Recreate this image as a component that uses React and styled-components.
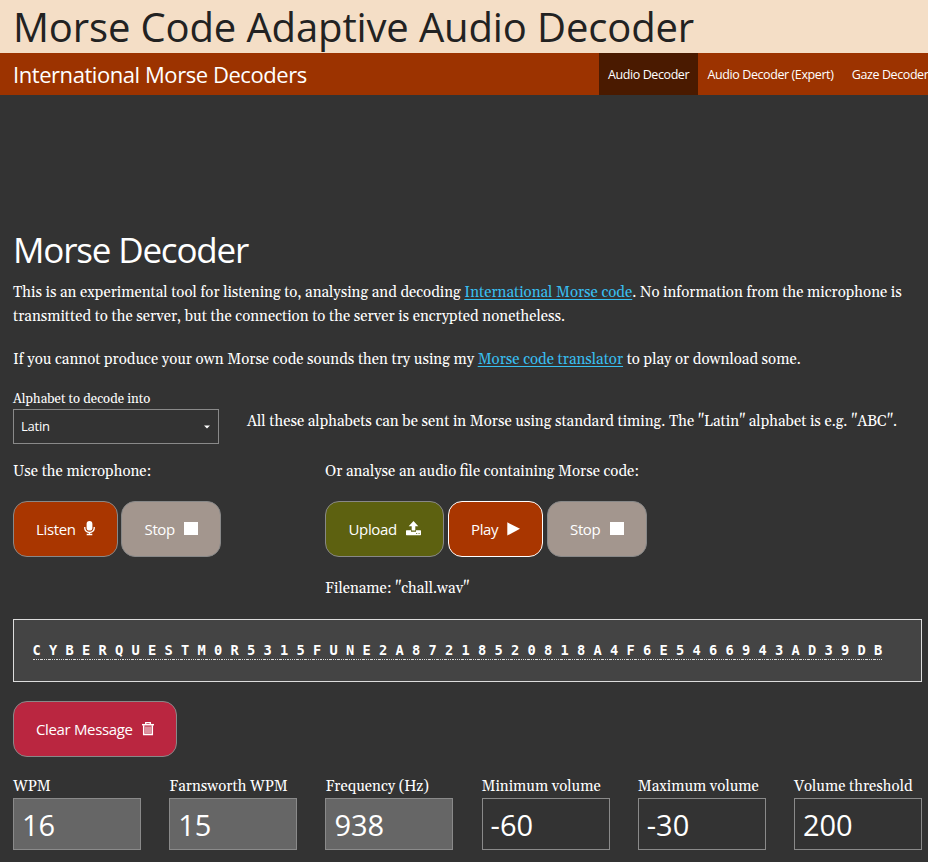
import React from "react";
import styled, { createGlobalStyle } from "styled-components";

const GlobalStyle = createGlobalStyle`
  *, *::before, *::after { box-sizing: border-box; }
  body {
    margin: 0;
    background: #333;
    color: #fff;
    font-family: "Gelasio", Georgia, "Liberation Serif", serif;
    font-size: 15px;
    line-height: 24px;
    overflow: hidden;
  }
`;

const sans = `"Open Sans", "Noto Sans", sans-serif`;

const Page = styled.div`
  height: 862px;
  overflow: hidden;
`;

const SiteHeader = styled.header`
  height: 53px;
  padding-left: 13px;
  background: #f4dec6;
`;

const SiteTitle = styled.h1`
  margin: 0;
  font: 400 40px/53px ${sans};
  letter-spacing: -0.13px;
  color: #222;
  white-space: nowrap;
`;

const NavBar = styled.nav`
  display: flex;
  height: 42px;
  background: #9c3300;
  white-space: nowrap;
`;

const Brand = styled.div`
  width: 599px;
  flex: none;
  padding-left: 13px;
  font: 400 22px/43px ${sans};
  letter-spacing: -0.44px;
`;

const NavItem = styled.a`
  flex: none;
  padding: 0 9px 0 ${(p) => (p.$active ? 9 : 9.4)}px;
  background: ${(p) => (p.$active ? "#4a1a00" : "transparent")};
  font: 400 12.5px/43px ${sans};
  letter-spacing: -0.41px;
  color: #fff;
`;

const Main = styled.main`
  padding: 130px 6px 0 13px;
`;

const Heading = styled.h2`
  margin: 0 0 7px;
  font: 400 35px/49px ${sans};
  letter-spacing: -1.18px;
`;

const Paragraph = styled.p`
  margin: 0 0 19px;
  white-space: nowrap;
`;

const Link = styled.a`
  color: #39bff0;
  text-decoration: underline;
  text-decoration-thickness: 1px;
  text-underline-offset: 2px;
`;

const AlphabetRow = styled.div`
  display: flex;
  height: 56px;
  margin-top: -2px;
`;

const AlphabetField = styled.div`
  width: 206px;
  margin-right: 28px;
`;

const SmallLabel = styled.label`
  display: block;
  height: 20px;
  font-size: 13.1px;
  line-height: 21px;
`;

const SelectBox = styled.div`
  display: flex;
  align-items: center;
  justify-content: space-between;
  height: 35px;
  padding: 0 8px 0 7px;
  border: 1px solid #8a8a8a;
  font: 400 13px/33px ${sans};
  letter-spacing: -0.2px;
`;

const Hint = styled.p`
  margin: 21px 0 0;
  white-space: nowrap;
`;

const Sources = styled.div`
  display: grid;
  grid-template-columns: 312px 1fr;
  margin-top: 14px;
  height: 160px;
`;

const SourceLabel = styled.div`
  height: 42px;
  padding-top: 1px;
`;

const ButtonRow = styled.div`
  display: flex;
  gap: ${(p) => p.$gap}px;
`;

const tones = {
  rust: "#a93600",
  olive: "#5d6110",
  muted: "#a3968e",
  red: "#ba2640",
};

const Button = styled.button`
  display: flex;
  align-items: center;
  flex: none;
  width: ${(p) => p.$width}px;
  height: 56px;
  padding: 0 0 0 ${(p) => p.$inset || 22}px;
  border: 1px solid ${(p) => (p.$focused ? "#fff" : "#888")};
  border-radius: 14px;
  background: ${(p) => tones[p.$tone]};
  color: #fff;
  font: 400 15px/24px ${sans};
  letter-spacing: -0.35px;
  white-space: nowrap;

  svg {
    flex: none;
    margin: 0 0 1px ${(p) => p.$iconGap || 9}px;
  }
`;

const FileName = styled.div`
  margin-top: 20px;
`;

const Output = styled.div`
  height: 63px;
  margin-bottom: 19px;
  padding: 18px 18.5px;
  border: 1px solid #ddd;
  background: #444;
  font: 700 13.7px/24px "DejaVu Sans Mono", monospace;
  white-space: pre;
`;

const Glyph = styled.span`
  display: inline-block;
  width: 8.25px;
  height: 22px;
  border-bottom: 1px dotted #ddd;
`;

const Settings = styled.div`
  display: grid;
  grid-template-columns: repeat(6, 128px);
  justify-content: space-between;
  margin-top: 17px;
`;

const SettingLabel = styled.label`
  display: block;
  height: 24px;
  line-height: 26px;
  white-space: nowrap;
`;

const Value = styled.div`
  height: 52px;
  padding-left: 8px;
  border: 1px solid #8a8a8a;
  background: ${(p) => (p.$readOnly ? "#666" : "transparent")};
  font: 400 29px/52px ${sans};
`;

const Caret = () => (
  <svg width="6" height="4" viewBox="0 0 6 4"><path d="M0 0.5h6L3 3.5z" fill="#fff" /></svg>
);
const Mic = () => (
  <svg width="11" height="15" viewBox="0 0 11 15" fill="none" stroke="#fff">
    <rect x="2.6" y="0" width="5.8" height="9.6" rx="2.9" fill="#fff" stroke="none" />
    <path d="M.8 6V7.3a4.7 4.2 0 0 0 9.4 0V6M5.5 11.4v2M2.7 13.5h5.6" strokeWidth="1.3" />
  </svg>
);
const Square = () => (
  <svg width="14" height="14" viewBox="0 0 14 14"><path d="M0 0h14v13H0z" fill="#fff" /></svg>
);
const Triangle = () => (
  <svg width="13" height="14" viewBox="0 0 13 14"><path d="M0.3 0.3L13 6.8 0.3 13.5z" fill="#fff" /></svg>
);
const UploadIcon = () => (
  <svg width="15" height="15" viewBox="0 0 15 15" fill="#fff">
    <path d="M7.5 0L12.3 5.2H9.3V9.5H5.7V5.2H2.7z" />
    <path fillRule="evenodd" d="M0.5 9.3H5v1.4h5V9.3h4.5l.5.5V13.7l-.5.5H.5L0 13.7V9.8zM10 12.2v.8h1.2v-.8zM12.5 12.2v.8h1.2v-.8z" />
  </svg>
);
const Trash = () => (
  <svg width="12" height="14" viewBox="0 0 12 14" fill="none" stroke="#fff">
    <path d="M0 2.7h12" strokeWidth="1.5" />
    <path d="M3.7 2.2V.7h4.6v1.5" strokeWidth="1.3" />
    <path d="M1.7 3.2V12.4h8.6V3.2" strokeWidth="1.5" />
    <path d="M4 4.5v7M6 4.5v7M8 4.5v7" strokeWidth="1" />
  </svg>
);

const message = "CYBERQUESTM0R5315FUNE2A87218520818A4F6E5466943AD39DB".split("").join(" ");

const settings = [
  ["WPM", "16", true],
  ["Farnsworth WPM", "15", true],
  ["Frequency (Hz)", "938", true],
  ["Minimum volume", "-60", false],
  ["Maximum volume", "-30", false],
  ["Volume threshold", "200", false],
];

export default function App() {
  return (
    <Page>
      <GlobalStyle />
      <SiteHeader>
        <SiteTitle>Morse Code Adaptive Audio Decoder</SiteTitle>
      </SiteHeader>
      <NavBar>
        <Brand>International Morse Decoders</Brand>
        <NavItem $active>Audio Decoder</NavItem>
        <NavItem>Audio Decoder (Expert)</NavItem>
        <NavItem>Gaze Decoder</NavItem>
      </NavBar>
      <Main>
        <Heading>Morse Decoder</Heading>
        <Paragraph>
          This is an experimental tool for listening to, analysing and decoding{" "}
          <Link>International Morse code</Link>. No information from the microphone is
          <br />
          transmitted to the server, but the connection to the server is encrypted nonetheless.
        </Paragraph>
        <Paragraph>
          If you cannot produce your own Morse code sounds then try using my{" "}
          <Link>Morse code translator</Link> to play or download some.
        </Paragraph>
        <AlphabetRow>
          <AlphabetField>
            <SmallLabel>Alphabet to decode into</SmallLabel>
            <SelectBox>Latin<Caret /></SelectBox>
          </AlphabetField>
          <Hint>
            All these alphabets can be sent in Morse using standard timing. The "Latin" alphabet is e.g. "ABC".
          </Hint>
        </AlphabetRow>
        <Sources>
          <div>
            <SourceLabel>Use the microphone:</SourceLabel>
            <ButtonRow $gap={3}>
              <Button $tone="rust" $width={105} $iconGap={8}>Listen<Mic /></Button>
              <Button $tone="muted" $width={100} $inset={22.5} $iconGap={9.5}>Stop<Square /></Button>
            </ButtonRow>
          </div>
          <div>
            <SourceLabel>Or analyse an audio file containing Morse code:</SourceLabel>
            <ButtonRow $gap={4}>
              <Button $tone="olive" $width={119} $inset={22.5} $iconGap={9.5}>Upload<UploadIcon /></Button>
              <Button $tone="rust" $width={95} $focused>Play<Triangle /></Button>
              <Button $tone="muted" $width={100} $iconGap={10}>Stop<Square /></Button>
            </ButtonRow>
            <FileName>Filename: "chall.wav"</FileName>
          </div>
        </Sources>
        <Output>
          {message.split("").map((ch, i) => (
            <Glyph key={i}>{ch}</Glyph>
          ))}
        </Output>
        <Button $tone="red" $width={164}>Clear Message<Trash /></Button>
        <Settings>
          {settings.map(([label, value, readOnly]) => (
            <div key={label}>
              <SettingLabel>{label}</SettingLabel>
              <Value $readOnly={readOnly}>{value}</Value>
            </div>
          ))}
        </Settings>
      </Main>
    </Page>
  );
}
